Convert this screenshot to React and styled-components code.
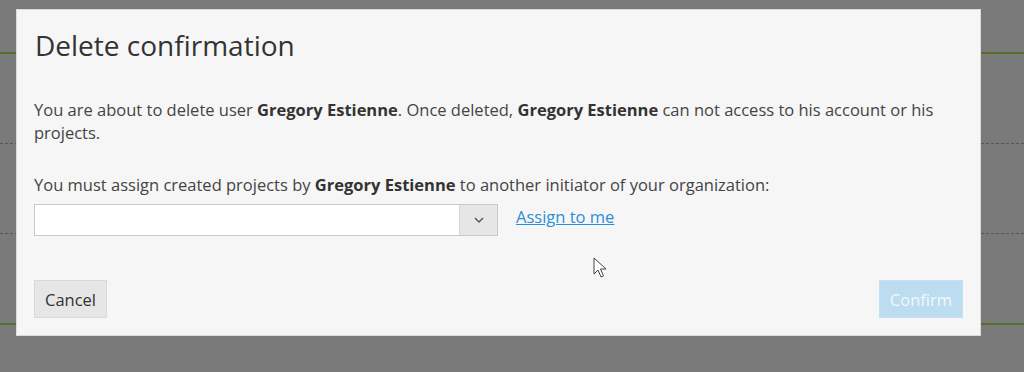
import styled, { createGlobalStyle } from "styled-components";

const GlobalStyle = createGlobalStyle`
  html, body {
    margin: 0;
    padding: 0;
    background: #7a7a7a;
    font-family: "Open Sans", "Liberation Sans", sans-serif;
  }
  #root {
    position: relative;
    width: 1024px;
    height: 372px;
    overflow: hidden;
  }
`;

const Page = styled.div`
  padding-top: 52px;
`;

const RowList = styled.div`
  border-top: 2px solid #55702a;
`;

const Row = styled.div`
  height: 89px;
  border-bottom: ${({ last }) => (last ? "2px solid #55702a" : "1px dashed #555")};
`;

const Modal = styled.div`
  position: absolute;
  left: 16px;
  top: 9px;
  width: 929px;
  padding: 20px 17px 17px 17px;
  background: #f6f6f6;
  border: 1px solid #dcdcdc;
  color: #444;
`;

const Title = styled.h2`
  margin: 0 0 37px 1px;
  font-size: 28px;
  line-height: 31px;
  font-weight: 400;
  color: #333;
`;

const Text = styled.p`
  margin: 0 0 ${({ mb }) => mb}px 0;
  font-size: 16.5px;
  line-height: 23px;
  b {
    color: #333;
    font-weight: 700;
  }
`;

const AssignRow = styled.div`
  display: flex;
  align-items: center;
  gap: 18px;
`;

const Select = styled.div`
  display: flex;
  width: 462px;
  height: 30px;
  border: 1px solid #c9c9c9;
  background: #fff;
`;

const SelectValue = styled.div`
  flex: 1;
`;

const SelectArrow = styled.div`
  width: 37px;
  background: #e6e6e6;
  border-left: 1px solid #d6d6d6;
  display: flex;
  align-items: center;
  justify-content: center;
`;

const Link = styled.a`
  margin-bottom: 8px;
  font-size: 16.5px;
  color: #2a8fd6;
  text-decoration: underline;
  cursor: pointer;
`;

const Footer = styled.div`
  display: flex;
  justify-content: space-between;
  margin-top: 44px;
`;

const Button = styled.button`
  height: 38px;
  padding: 0 10px;
  font-family: "Open Sans", "Liberation Sans", sans-serif;
  font-size: 16.5px;
  border: 1px solid ${({ primary }) => (primary ? "#c4e0f3" : "#d9d9d9")};
  background: ${({ primary }) => (primary ? "#bcdcf0" : "#e6e6e6")};
  color: ${({ primary }) => (primary ? "#f2f8fc" : "#333")};
  cursor: pointer;
`;

const Cursor = styled.svg`
  position: absolute;
  left: 593px;
  top: 257px;
`;

const App = () => {
  return (
    <>
      <GlobalStyle />
      <Page>
        <RowList>
          <Row />
          <Row />
          <Row last />
        </RowList>
      </Page>
      <Modal>
        <Title>Delete confirmation</Title>
        <Text mb={29}>
          You are about to delete user <b>Gregory Estienne</b>. Once deleted,{" "}
          <b>Gregory Estienne</b> can not access to his account or his projects.
        </Text>
        <Text mb={8}>
          You must assign created projects by <b>Gregory Estienne</b> to another
          initiator of your organization:
        </Text>
        <AssignRow>
          <Select>
            <SelectValue />
            <SelectArrow>
              <svg width="10" height="6" viewBox="0 0 10 6">
                <path d="M1 1l4 4 4-4" fill="none" stroke="#555" strokeWidth="1.4" />
              </svg>
            </SelectArrow>
          </Select>
          <Link>Assign to me</Link>
        </AssignRow>
        <Footer>
          <Button>Cancel</Button>
          <Button primary>Confirm</Button>
        </Footer>
      </Modal>
      <Cursor width="14" height="22" viewBox="0 0 14 22">
        <path
          d="M1 1v16l4-4 3 7 2.5-1-3-7h5.5z"
          fill="#fff"
          stroke="#444"
          strokeWidth="1"
          strokeLinejoin="round"
        />
      </Cursor>
    </>
  );
};

export default App;
